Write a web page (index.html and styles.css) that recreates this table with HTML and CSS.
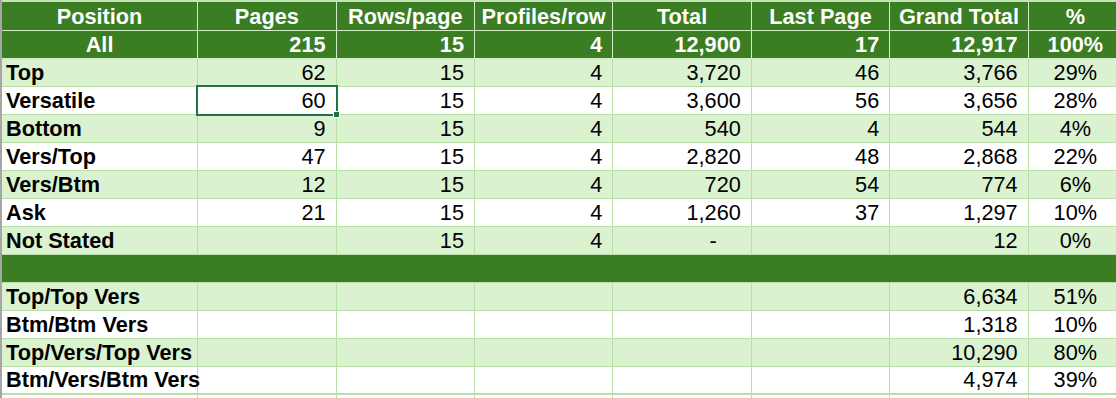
FILE: index.html
```html
<!DOCTYPE html>
<html>
<head>
<meta charset="utf-8">
<link rel="stylesheet" href="styles.css">
</head>
<body>
<div class="sheet">
<div class="topstrip"></div>
<table class="grid">
<colgroup>
<col class="c-pos"><col class="c-n"><col class="c-n"><col class="c-n"><col class="c-n"><col class="c-n"><col class="c-n"><col class="c-pct">
</colgroup>
<tr class="hdr">
<td>Position</td><td>Pages</td><td>Rows/page</td><td>Profiles/row</td><td>Total</td><td>Last Page</td><td>Grand Total</td><td>%</td>
</tr>
<tr class="hdr all">
<td class="ctr">All</td><td class="num">215</td><td class="num">15</td><td class="num">4</td><td class="num">12,900</td><td class="num">17</td><td class="num">12,917</td><td class="ctr">100%</td>
</tr>
<tr class="g">
<td class="lbl">Top</td><td class="num">62</td><td class="num">15</td><td class="num">4</td><td class="num">3,720</td><td class="num">46</td><td class="num">3,766</td><td class="ctr">29%</td>
</tr>
<tr class="w">
<td class="lbl">Versatile</td><td class="num sel">60<span class="selbox"></span><span class="handle"></span></td><td class="num">15</td><td class="num">4</td><td class="num">3,600</td><td class="num">56</td><td class="num">3,656</td><td class="ctr">28%</td>
</tr>
<tr class="g">
<td class="lbl">Bottom</td><td class="num">9</td><td class="num">15</td><td class="num">4</td><td class="num">540</td><td class="num">4</td><td class="num">544</td><td class="ctr">4%</td>
</tr>
<tr class="w">
<td class="lbl">Vers/Top</td><td class="num">47</td><td class="num">15</td><td class="num">4</td><td class="num">2,820</td><td class="num">48</td><td class="num">2,868</td><td class="ctr">22%</td>
</tr>
<tr class="g">
<td class="lbl">Vers/Btm</td><td class="num">12</td><td class="num">15</td><td class="num">4</td><td class="num">720</td><td class="num">54</td><td class="num">774</td><td class="ctr">6%</td>
</tr>
<tr class="w">
<td class="lbl">Ask</td><td class="num">21</td><td class="num">15</td><td class="num">4</td><td class="num">1,260</td><td class="num">37</td><td class="num">1,297</td><td class="ctr">10%</td>
</tr>
<tr class="g">
<td class="lbl">Not Stated</td><td class="num"></td><td class="num">15</td><td class="num">4</td><td class="num dash">-</td><td class="num"></td><td class="num">12</td><td class="ctr">0%</td>
</tr>
<tr class="sep">
<td colspan="8"></td>
</tr>
<tr class="g">
<td class="lbl">Top/Top Vers</td><td></td><td></td><td></td><td></td><td></td><td class="num">6,634</td><td class="ctr">51%</td>
</tr>
<tr class="w">
<td class="lbl">Btm/Btm Vers</td><td></td><td></td><td></td><td></td><td></td><td class="num">1,318</td><td class="ctr">10%</td>
</tr>
<tr class="g">
<td class="lbl">Top/Vers/Top Vers</td><td></td><td></td><td></td><td></td><td></td><td class="num">10,290</td><td class="ctr">80%</td>
</tr>
<tr class="w last">
<td class="lbl">Btm/Vers/Btm Vers</td><td></td><td></td><td></td><td></td><td></td><td class="num">4,974</td><td class="ctr">39%</td>
</tr>
<tr class="w tail">
<td></td><td></td><td></td><td></td><td></td><td></td><td></td><td></td>
</tr>
</table>
</div>
</body>
</html>
```

FILE: styles.css
```css
html, body {
  margin: 0;
  padding: 0;
  background: #ffffff;
  overflow: hidden;
}
.sheet {
  width: 1120px;
  height: 398px;
  border-left: 2px solid #a6a6a6;
  box-sizing: border-box;
  overflow: hidden;
}
.topstrip {
  height: 2px;
  background: #c4e6b6;
}
.grid {
  border-collapse: collapse;
  table-layout: fixed;
  width: 1121px;
  font-family: "Liberation Sans", Arial, sans-serif;
  font-size: 21.7px;
  line-height: 24px;
  color: #000;
}
.c-pos { width: 195px; }
.c-n { width: 138px; }
.c-pct { width: 94px; }
.grid td {
  height: 28px;
  padding: 0 4px 1px 4px;
  border: 1px solid #b6e0a6;
  vertical-align: bottom;
  white-space: nowrap;
  overflow: visible;
  box-sizing: border-box;
}
.grid tr:first-child td { border-top: none; }
.grid td:first-child { border-left: none; }
.hdr td {
  background: #3a7d22;
  color: #ffffff;
  font-weight: bold;
  text-align: center;
  border-color: #d0ecc4;
}
.g td { background: #daf2d0; }
.w td { background: #ffffff; }
.lbl { font-weight: bold; text-align: left; }
.num { text-align: right; padding-right: 10px !important; }
.ctr { text-align: center; }
.hdr .num { text-align: right; }
.dash { padding-right: 34px !important; }
.sep td {
  background: #3a7d22;
  border-top: 1px solid #b6e0a6;
  border-bottom: 1px solid #b6e0a6;
}
.last td { border-bottom: 2px solid #b6e0a6; }
.tail td { height: 10px; border-bottom: none; }
.sel { position: relative; }
.selbox {
  position: absolute;
  left: -2px;
  top: -2px;
  right: -2px;
  bottom: -2px;
  border: 2px solid #217346;
  pointer-events: none;
}
.handle {
  position: absolute;
  right: -4px;
  bottom: -4px;
  width: 5px;
  height: 5px;
  background: #217346;
  border: 1px solid #ffffff;
}
```
